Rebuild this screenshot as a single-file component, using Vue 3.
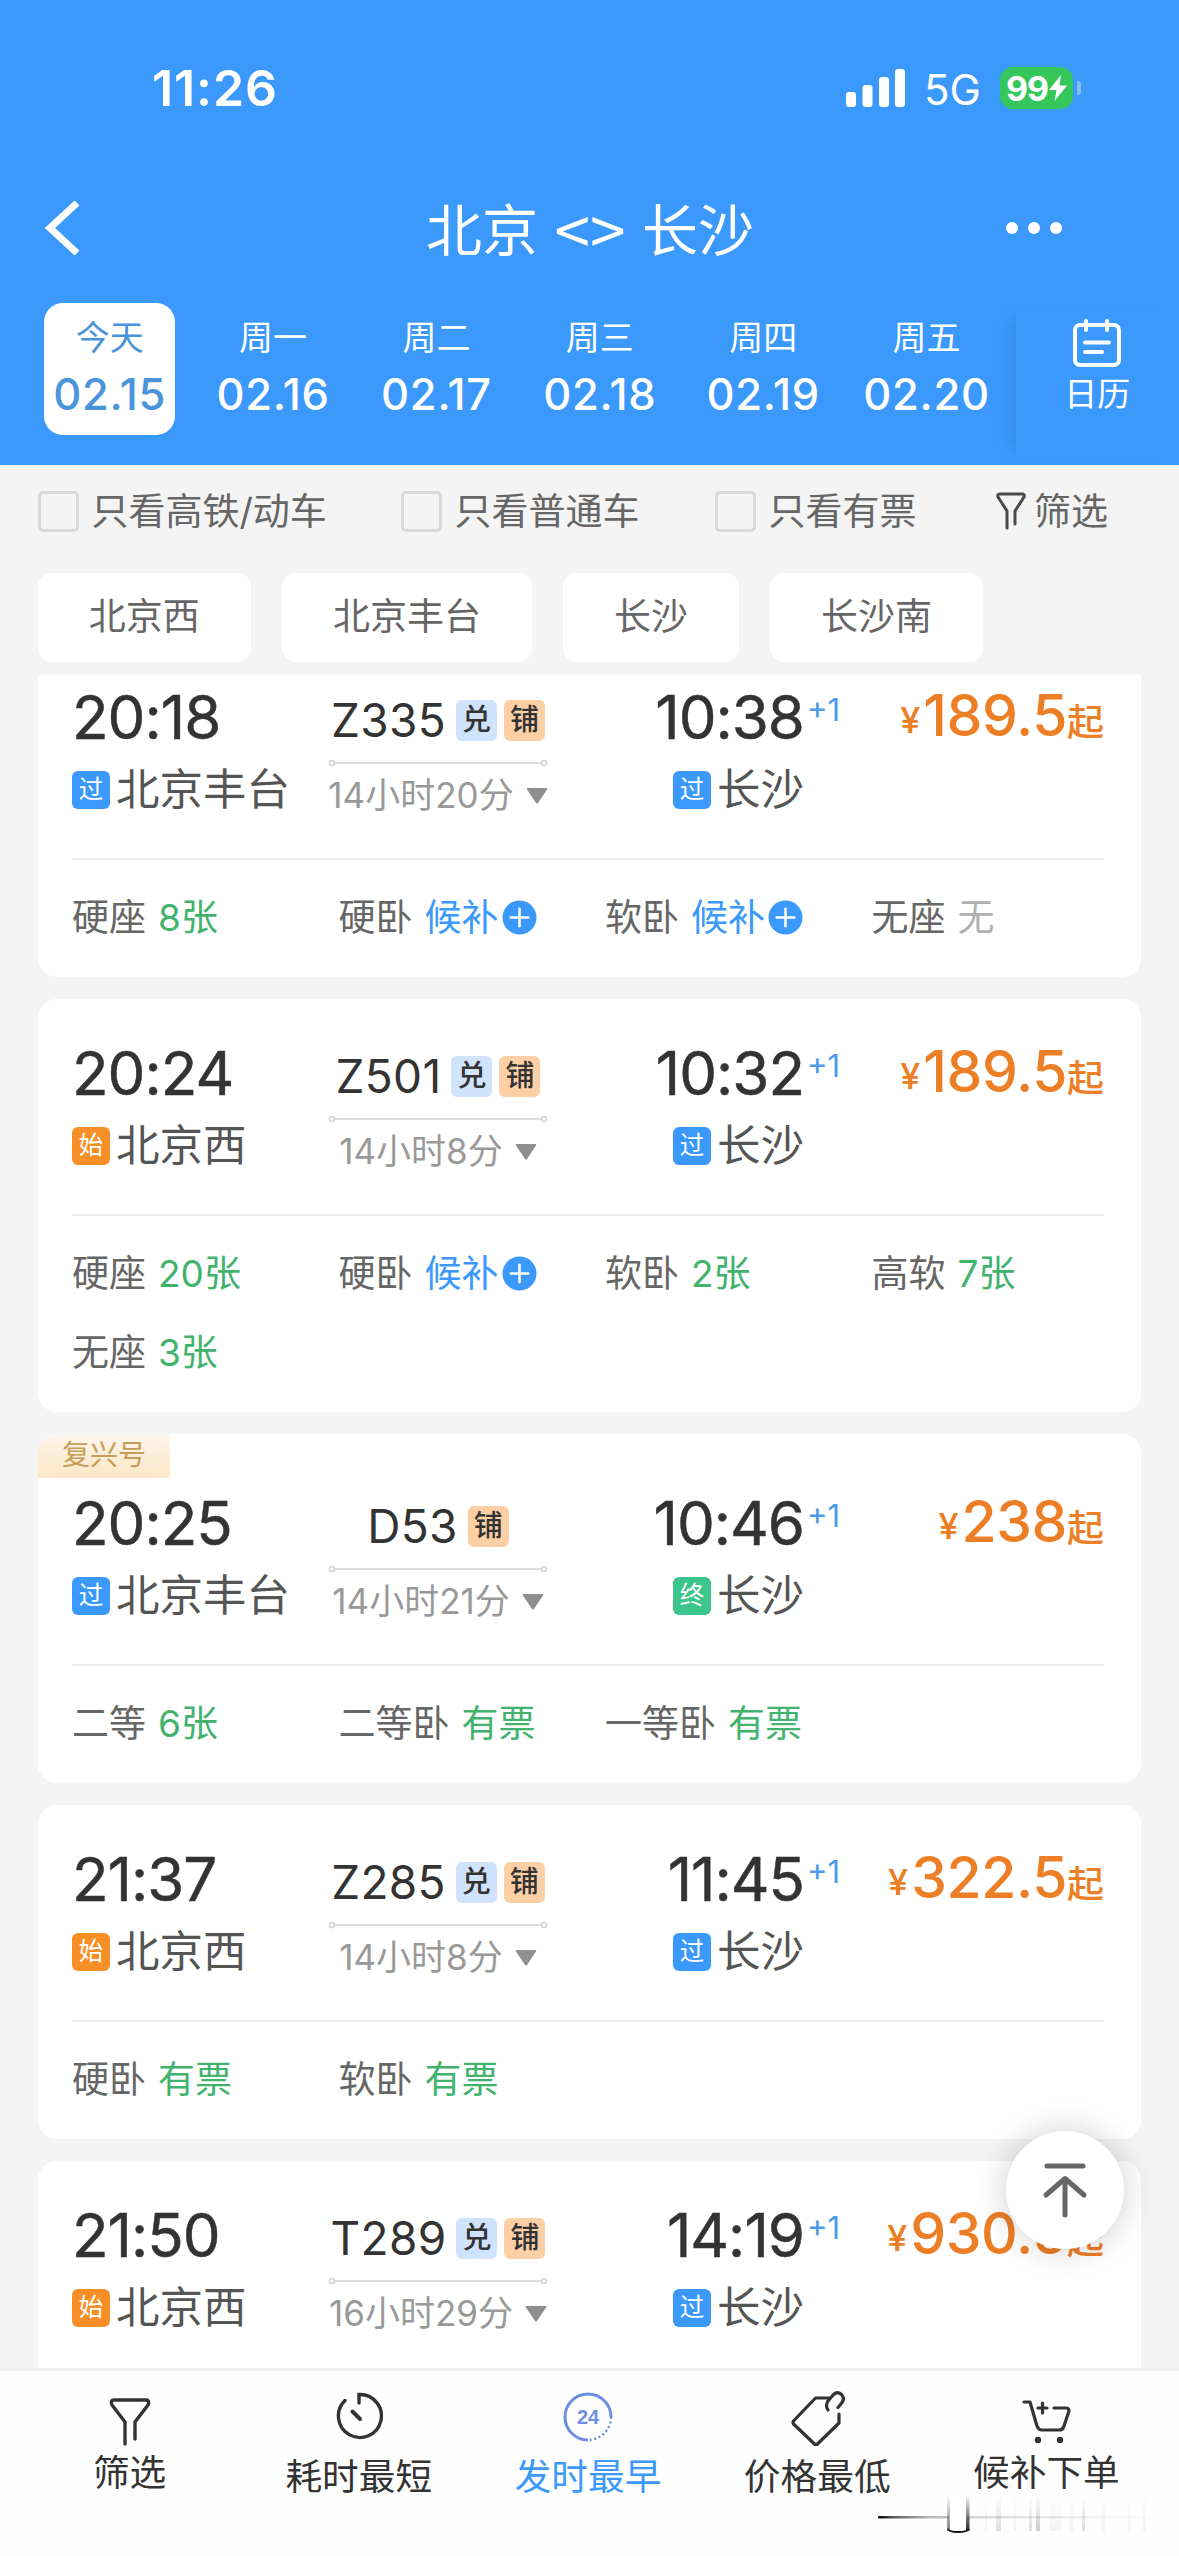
<script setup>
const dates = [
  { day: '今天', date: '02.15', active: true },
  { day: '周一', date: '02.16' },
  { day: '周二', date: '02.17' },
  { day: '周三', date: '02.18' },
  { day: '周四', date: '02.19' },
  { day: '周五', date: '02.20' },
]

const checks = [
  { text: '只看高铁/动车', cls: 'c1' },
  { text: '只看普通车', cls: 'c2' },
  { text: '只看有票', cls: 'c3' },
]

const stations = ['北京西', '北京丰台', '长沙', '长沙南']

const kinds = { 过: 'pass', 始: 'start', 终: 'end' }

const trains = [
  {
    dep: '20:18', depKind: '过', from: '北京丰台', no: 'Z335', tags: ['兑', '铺'], dur: '14小时20分',
    arr: '10:38', arrKind: '过', price: '189.5',
    seats: [['硬座', '8张', 'ok'], ['硬卧', '候补', 'wait'], ['软卧', '候补', 'wait'], ['无座', '无', 'none']],
  },
  {
    dep: '20:24', depKind: '始', from: '北京西', no: 'Z501', tags: ['兑', '铺'], dur: '14小时8分',
    arr: '10:32', arrKind: '过', price: '189.5',
    seats: [['硬座', '20张', 'ok'], ['硬卧', '候补', 'wait'], ['软卧', '2张', 'ok'], ['高软', '7张', 'ok'], ['无座', '3张', 'ok']],
  },
  {
    label: '复兴号',
    dep: '20:25', depKind: '过', from: '北京丰台', no: 'D53', tags: ['铺'], dur: '14小时21分',
    arr: '10:46', arrKind: '终', price: '238',
    seats: [['二等', '6张', 'ok'], ['二等卧', '有票', 'ok'], ['一等卧', '有票', 'ok']],
  },
  {
    dep: '21:37', depKind: '始', from: '北京西', no: 'Z285', tags: ['兑', '铺'], dur: '14小时8分',
    arr: '11:45', arrKind: '过', price: '322.5',
    seats: [['硬卧', '有票', 'ok'], ['软卧', '有票', 'ok']],
  },
  {
    dep: '21:50', depKind: '始', from: '北京西', no: 'T289', tags: ['兑', '铺'], dur: '16小时29分',
    arr: '14:19', arrKind: '过', price: '930.5',
    seats: [],
  },
]
</script>

<template>
  <div class="page">
    <header class="header">
      <div class="status">
        <span class="clock">11:26</span>
        <div class="status-right">
          <svg class="signal" width="60" height="38" viewBox="0 0 60 38" fill="#fff">
            <rect x="0" y="23" width="10" height="15" rx="3" />
            <rect x="16.5" y="16" width="10" height="22" rx="3" />
            <rect x="33" y="8" width="10" height="30" rx="3" />
            <rect x="49" y="0" width="10" height="38" rx="3" />
          </svg>
          <span class="net">5G</span>
          <div class="battery">
            <span>99</span>
            <svg width="18" height="26" viewBox="0 0 18 26" fill="#fff"><path d="M12 0 0 15h7.500L5.500 26 18 10.500h-7.500z" /></svg>
          </div>
          <i class="nub"></i>
        </div>
      </div>
      <div class="nav">
        <svg class="back" width="38" height="54" viewBox="0 0 38 54" fill="none" stroke="#fff" stroke-width="7"><path d="M34 2 7 27l27 25" /></svg>
        <h1 class="title"><span>北京</span><i>&lt;&gt;</i><span>长沙</span></h1>
        <svg class="more" width="60" height="16" viewBox="0 0 60 16" fill="#fff">
          <circle cx="8" cy="8" r="6" /><circle cx="30" cy="8" r="6" /><circle cx="52" cy="8" r="6" />
        </svg>
      </div>
      <div class="dates">
        <div v-for="d in dates" :key="d.date" class="date" :class="{ active: d.active }">
          <span class="day">{{ d.day }}</span>
          <span class="num">{{ d.date }}</span>
        </div>
        <div class="calendar">
          <svg width="50" height="50" viewBox="0 0 50 50" fill="none" stroke="#fff" stroke-width="4" stroke-linecap="round">
            <rect x="3" y="7" width="44" height="40" rx="5" />
            <path d="M14 3v9M35 3v9M13 24.500h24M13 34h17" />
          </svg>
          <span>日历</span>
        </div>
      </div>
    </header>

    <div class="checks">
      <label v-for="c in checks" :key="c.text" class="check" :class="c.cls"><i></i><span>{{ c.text }}</span></label>
      <div class="filter">
        <svg width="30" height="38" viewBox="0 0 30 38" fill="none" stroke="#4a4a4a" stroke-width="3" stroke-linecap="round" stroke-linejoin="round">
          <path d="M11 36V19L2 5q-1-3 2-3h22q3 0 2 3l-9 14v13" />
        </svg>
        <span>筛选</span>
      </div>
    </div>

    <div class="chips">
      <span v-for="s in stations" :key="s" class="chip">{{ s }}</span>
    </div>

    <main class="list">
      <section v-for="t in trains" :key="t.no" class="card" :class="{ labelled: t.label }">
        <span v-if="t.label" class="label">{{ t.label }}</span>
        <div class="head">
          <div class="col">
            <span class="time">{{ t.dep }}</span>
            <span class="station"><b :class="kinds[t.depKind]">{{ t.depKind }}</b><span>{{ t.from }}</span></span>
          </div>
          <div class="mid">
            <div class="train">
              <span class="no">{{ t.no }}</span>
              <em v-for="g in t.tags" :key="g" :class="g === '兑' ? 'dui' : 'pu'">{{ g }}</em>
            </div>
            <svg class="track" width="220" height="8" viewBox="0 0 220 8" fill="#fff" stroke="#d2d2d2" stroke-width="1.500">
              <path d="M6 4h208" /><circle cx="4" cy="4" r="2.600" /><circle cx="216" cy="4" r="2.600" />
            </svg>
            <div class="duration">
              <span>{{ t.dur }}</span>
              <svg width="22" height="16" viewBox="0 0 22 16" fill="#8f8f8f"><path d="M1.500 0h19q1.500 0 .5 1.500l-9 13.500q-1 1-2 0L1 1.500Q0 0 1.500 0z" /></svg>
            </div>
          </div>
          <div class="col arrive">
            <span class="time">{{ t.arr }}<sup>+1</sup></span>
            <span class="station"><b :class="kinds[t.arrKind]">{{ t.arrKind }}</b><span>长沙</span></span>
          </div>
          <div class="price"><i>¥</i><strong>{{ t.price }}</strong><span>起</span></div>
        </div>
        <div class="seats">
          <div v-for="s in t.seats" :key="s[0]" class="seat">
            <span>{{ s[0] }}</span>
            <span :class="s[2]">{{ s[1] }}</span>
            <svg v-if="s[2] === 'wait'" width="35" height="35" viewBox="0 0 36 36"><circle cx="18" cy="18" r="17.500" fill="#3b99fc" /><path d="M9 18h18M18 9v18" stroke="#fff" stroke-width="2.600" stroke-linecap="round" /></svg>
          </div>
        </div>
      </section>
    </main>

    <button class="totop">
      <svg width="46" height="56" viewBox="0 0 46 56" fill="none" stroke="#666" stroke-width="5" stroke-linecap="round" stroke-linejoin="round">
        <path d="M5 4h36M23 17v36M4 33l19-16.500L42 33" />
      </svg>
    </button>

    <nav class="tabs">
      <div class="tab up">
        <svg width="44" height="56" viewBox="0 0 44 56" fill="none" stroke="#333" stroke-width="3.400" stroke-linecap="round" stroke-linejoin="round">
          <path d="M17 54V32L4 15q-2-5 2-5h32q4 0 2 5L27 32v17" />
        </svg>
        <span>筛选</span>
      </div>
      <div class="tab">
        <svg width="48" height="56" viewBox="0 0 48 56" fill="none" stroke="#333" stroke-width="3.400" stroke-linecap="round">
          <path d="M24 13V4.500A21.500 21.500 0 1 1 10 10.500" />
          <path d="M17.500 21.500 25 29" stroke-width="4" />
        </svg>
        <span>耗时最短</span>
      </div>
      <div class="tab on">
        <div class="round24">
          <svg width="50" height="50" viewBox="0 0 50 50" fill="none" stroke="#6b8fe0" stroke-width="3">
            <path d="M25 48A23 23 0 1 1 48 25" />
            <path d="M48 25A23 23 0 0 1 25 48" stroke-width="2.500" stroke-dasharray="2 2.600" />
          </svg>
          <b>24</b>
        </div>
        <span>发时最早</span>
      </div>
      <div class="tab">
        <svg width="56" height="56" viewBox="0 0 56 56" fill="none" stroke="#333" stroke-width="3.200" stroke-linecap="round" stroke-linejoin="round">
          <path d="M40 8H26.500L4.500 31q-1 1.500 0 3L25.500 54q1.500 1.500 3 0L50 33V24" />
          <path d="M39 20q-3-4 0-9l5.500-6.500q4-3.500 8 0 3.500 4 .5 8l-4 5" />
        </svg>
        <span>价格最低</span>
      </div>
      <div class="tab up">
        <svg width="50" height="56" viewBox="0 0 50 56" fill="none" stroke="#333" stroke-width="3.200" stroke-linecap="round" stroke-linejoin="round">
          <path d="M3 12h6l7 24q1.500 4 5 4h17q4 0 5-4l5-15q0-3-3-3H33M17 18h9M21.500 13v10" />
          <circle cx="17" cy="50" r="1.600" fill="#333" /><circle cx="39" cy="50" r="1.600" fill="#333" />
        </svg>
        <span>候补下单</span>
      </div>
    </nav>

    <svg class="streaks" width="290" height="42" viewBox="0 0 290 42">
      <defs>
        <linearGradient id="fadeX" x1="0" x2="1" y1="0" y2="0">
          <stop offset="0" stop-color="#000" /><stop offset=".05" stop-color="#555" /><stop offset=".18" stop-color="#bbb" /><stop offset=".4" stop-color="#ddd" /><stop offset="1" stop-color="#fff" />
        </linearGradient>
        <linearGradient id="fadeY" x1="0" x2="0" y1="0" y2="1">
          <stop offset="0" stop-color="#000" stop-opacity="0" /><stop offset="1" stop-color="#000" />
        </linearGradient>
      </defs>
      <rect x="1" y="21" width="285" height="2.500" rx="1" fill="url(#fadeX)" />
      <rect x="72" y="0" width="18" height="36" fill="#fff" />
      <rect x="70" y="0" width="3" height="36" fill="url(#fadeY)" opacity=".5" />
      <rect x="89" y="0" width="3.500" height="36" fill="url(#fadeY)" opacity=".85" />
      <path d="M71 34q1 3 10 3t11-3" fill="none" stroke="#111" stroke-width="1.800" />
      <g fill="url(#fadeY)">
        <rect x="108" y="0" width="2" height="36" opacity=".04" />
        <rect x="119" y="0" width="5" height="36" opacity=".12" />
        <rect x="136" y="0" width="3" height="36" opacity=".05" />
        <rect x="152" y="0" width="3" height="36" opacity=".13" />
        <rect x="159" y="0" width="4" height="36" opacity=".2" />
        <rect x="172" y="0" width="12" height="36" opacity=".04" />
        <rect x="192" y="0" width="5" height="36" opacity=".04" />
        <rect x="205" y="0" width="3" height="36" opacity=".13" />
        <rect x="224" y="0" width="4" height="36" opacity=".04" />
        <rect x="251" y="0" width="3" height="36" opacity=".04" />
        <rect x="266" y="0" width="3" height="36" opacity=".05" />
      </g>
    </svg>
  </div>
</template>

<style>
body { margin: 0; background: #f4f4f4; }
</style>

<style scoped>
* { box-sizing: border-box; }
.page {
  position: relative;
  width: 1179px;
  height: 2556px;
  overflow: hidden;
  display: flex;
  flex-direction: column;
  background: #f4f4f4;
  color: #333;
  font-family: Inter, "Noto Sans CJK SC", sans-serif;
}
svg { display: block; flex: none; }
i, em { font-style: normal; }

.header { height: 465px; flex: none; background: #3b99fc; color: #fff; }
.status { height: 176px; padding: 0 98px 0 152px; display: flex; justify-content: space-between; align-items: center; }
.clock { font-size: 50px; font-weight: 600; letter-spacing: 0.9px; }
.status-right { display: flex; align-items: center; }
.net { margin-left: 18px; width: 76px; font-size: 42px; line-height: 42px; padding-top: 3px; }
.battery { width: 73px; height: 42px; border-radius: 13px; background: #34c759; display: flex; align-items: center; justify-content: center; font-size: 34px; font-weight: 700; letter-spacing: -1px; }
.battery svg { margin-left: 1px; }
.nub { width: 4px; height: 14px; margin-left: 4px; border-radius: 0 7px 7px 0; background: #7cc4f0; }
.nav { height: 104px; padding: 0 115px 0 43px; display: grid; grid-template-columns: 383px 1fr auto; align-items: center; }
.title { margin: 0; display: flex; align-items: center; height: 74px; padding-bottom: 3px; font-size: 56px; font-weight: 400; line-height: 70px; font-family: "Noto Sans CJK SC", sans-serif; }
.title i { width: 104px; text-align: center; font-size: 64px; line-height: 70px; }
.dates { display: flex; margin-top: 23px; padding-left: 28px; height: 162px; }
.date { width: 131px; height: 132px; margin: 0 16.200px; border-radius: 19px; display: flex; flex-direction: column; align-items: center; white-space: nowrap; }
.date.active { background: #fff; color: #4a94dc; }
.day { font-size: 34px; line-height: 40px; margin-top: 15px; }
.num { font-size: 43.500px; font-weight: 450; line-height: 44px; margin-top: 14px; letter-spacing: 0.7px; }
.calendar { width: 162px; height: 150px; margin-top: 7px; margin-left: 8px; display: flex; flex-direction: column; align-items: center; padding: 8px 0 0 0; box-shadow: -12px 0 14px -10px rgba(30, 90, 170, .3); }
.calendar span { font-size: 33px; line-height: 40px; margin-top: 6px; }

.checks { height: 92px; padding-left: 38px; display: flex; align-items: center; font-size: 37px; color: #666; }
.check { display: flex; align-items: center; white-space: nowrap; }
.check i { width: 41px; height: 41px; border: 3px solid #d9d9d9; border-radius: 5px; margin-right: 12.500px; }
.checks span { padding-bottom: 5px; }
.c1 { width: 363px; }
.c2 { width: 314px; }
.c3 { width: 281px; }
.filter { display: flex; align-items: center; gap: 8px; }

.chips { display: flex; gap: 31.500px; padding: 16px 38px 0; height: 118px; flex: none; }
.chip { height: 89px; padding: 0 50.800px; border-radius: 14px; background: #fff; font-size: 37px; line-height: 88px; color: #666; }

.list { height: 1693px; flex: none; overflow: hidden; padding: 0 38px; display: flex; flex-direction: column; gap: 22px; }
.card { position: relative; flex: none; background: #fff; border-radius: 19px; padding: 0 37px 20px 34px; }
.card:first-child { margin-top: -32px; }
.card.labelled { padding-top: 15px; }
.label { position: absolute; left: 0; top: 0; width: 132px; height: 44px; border-radius: 19px 0 4px 0; background: linear-gradient(#fdf5ed, #fde6c4); color: #c59d55; font-size: 28px; line-height: 42px; text-align: center; }
.head { height: 217px; display: grid; grid-template-columns: 256px 220px 256px 1fr; border-bottom: 2px solid #ececec; }
.col { display: flex; flex-direction: column; padding-top: 44px; white-space: nowrap; }
.time { position: relative; font-size: 60px; line-height: 60px; letter-spacing: -1px; font-weight: 400; -webkit-text-stroke: 0.5px currentColor; }
.station { display: flex; align-items: center; height: 44px; margin-top: 21px; font-size: 43.500px; color: #555; }
.station span { line-height: 44px; padding-bottom: 3px; }
.station b { width: 38px; height: 38px; margin-right: 6px; border-radius: 6px; color: #fff; font-size: 24.500px; font-weight: 400; line-height: 36px; text-align: center; }
.pass { background: #3b99fc; }
.start { background: #f78f26; }
.end { background: #3cc58a; }
.arrive { align-items: flex-end; }
.time sup { position: absolute; left: 100%; top: 5px; margin-left: 3px; font-size: 31px; line-height: 36px; letter-spacing: 0; font-weight: 400; color: #4c9bea; -webkit-text-stroke: 0; }
.mid { display: flex; flex-direction: column; align-items: center; }
.train { display: flex; align-items: center; height: 42px; margin-top: 56px; }
.no { font-size: 46px; line-height: 42px; letter-spacing: 0.3px; margin-right: 3px; }
.train em { width: 41px; height: 41px; margin-left: 7px; border-radius: 6px; font-size: 29px; line-height: 40px; text-align: center; font-weight: 500; }
.dui { background: #cfe3fc; }
.pu { background: #fdcfa5; }
.track { margin-top: 18px; }
.duration { display: flex; align-items: center; gap: 12px; height: 40px; margin-top: 9px; font-size: 35px; color: #999; white-space: nowrap; }
.duration span { line-height: 40px; padding-bottom: 3px; }
.price { display: flex; justify-content: flex-end; align-items: baseline; padding-top: 38px; height: 110px; color: #ec7e26; white-space: nowrap; }
.price i { font-size: 36px; margin-right: 3px; font-weight: 500; transform: translateY(-3px); }
.price strong { font-size: 57px; font-weight: 500; letter-spacing: -0.4px; }
.price span { font-size: 37px; font-weight: 500; }
.seats { display: grid; grid-template-columns: repeat(4, 266.500px); padding-top: 18px; width: 1067px; min-height: 97px; }
.seat { height: 79px; display: flex; align-items: center; font-size: 37px; color: #666; white-space: nowrap; }
.seat span { padding-bottom: 5px; }
.seat span + span { margin-left: 12px; }
.seat svg { margin-left: 3px; }
.seat .ok { color: #42b36d; }
.seat .wait { color: #3b99fc; }
.seat .none { color: #b0b0b0; }

.totop { position: absolute; left: 1006px; top: 2131px; width: 118px; height: 118px; border: 0; padding: 0; border-radius: 50%; background: #fff; box-shadow: 0 0 34px rgba(0, 0, 0, .2); display: flex; align-items: center; justify-content: center; }

.tabs { height: 188px; flex: none; background: #fefefe; border-top: 3px solid #efefef; padding: 0 18px 0 15px; display: flex; }
.tab { flex: 1; display: flex; flex-direction: column; align-items: center; padding-top: 19px; font-size: 36.700px; color: #333; white-space: nowrap; }
.tab > span { line-height: 44px; margin-top: 8.500px; }
.tab.up > span { margin-top: 4.500px; }
.tab.on { color: #3b99fc; }
.round24 { width: 50px; height: 50px; margin: 2px 0 4px; display: grid; place-items: center; }
.round24 > * { grid-area: 1 / 1; }
.round24 b { font-size: 20px; color: #6b8fe0; font-family: "Liberation Sans", sans-serif; }
.streaks { position: absolute; left: 877px; top: 2495px; }
</style>
